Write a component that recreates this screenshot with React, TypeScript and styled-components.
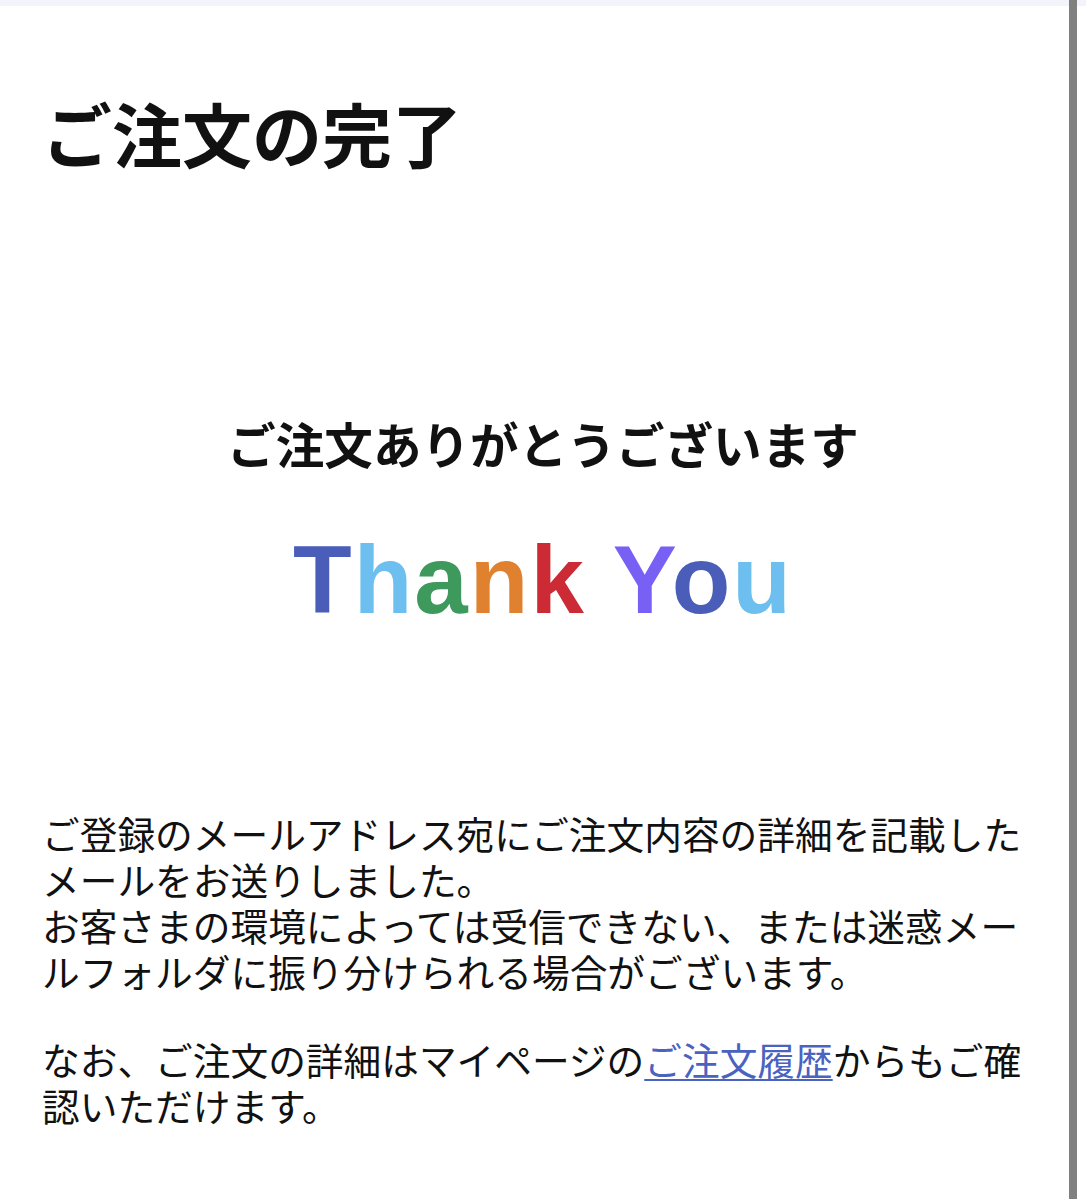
import React from 'react';
import styled, { createGlobalStyle } from 'styled-components';

const GlobalStyle = createGlobalStyle`
  body {
    margin: 0;
    background: #ffffff;
    color: #111111;
    font-family: 'Noto Sans CJK JP', 'Noto Sans', sans-serif;
  }
`;

const TopStrip = styled.div`
  height: 6px;
  background-color: #f3f3fb;
`;

const ScrollTrack = styled.div`
  position: fixed;
  top: 0;
  bottom: 0;
  right: 9px;
  width: 8px;
  background-color: #808080;
`;

const Page = styled.main`
  padding: 0 42px 60px;
`;

const Title = styled.h1`
  margin: 86px 0 0;
  font-size: 70px;
  line-height: 82px;
  font-weight: 700;
`;

const Greeting = styled.h2`
  margin: 240px 0 0;
  text-align: center;
  font-size: 48.6px;
  line-height: 58px;
  font-weight: 700;
`;

const ThankYou = styled.div`
  margin-top: 53px;
  text-align: center;
  font-family: 'Liberation Sans', Arial, sans-serif;
  font-size: 96px;
  line-height: 109px;
  font-weight: 700;
  letter-spacing: 2px;
`;

const Letter = styled.span<{ color: string }>`
  color: ${(props) => props.color};
`;

const Message = styled.section`
  margin-top: 176px;
`;

const Paragraph = styled.p`
  margin: 0 0 42px;
  font-size: 37.7px;
  line-height: 46px;
`;

const HistoryLink = styled.a`
  color: #4a62c0;
  text-decoration: underline;
  text-underline-offset: 4px;
  text-decoration-thickness: 2px;
`;

const letters = [
  { ch: 'T', color: '#4a5db8' },
  { ch: 'h', color: '#6cbfee' },
  { ch: 'a', color: '#3d9a5c' },
  { ch: 'n', color: '#e0812f' },
  { ch: 'k', color: '#cc2b35' },
  { ch: ' ', color: '#000000' },
  { ch: 'Y', color: '#7860f5' },
  { ch: 'o', color: '#4a5db8' },
  { ch: 'u', color: '#6cbfee' },
];

const App = () => {
  return (
    <>
      <GlobalStyle />
      <TopStrip />
      <ScrollTrack />
      <Page>
        <Title>ご注文の完了</Title>
        <Greeting>ご注文ありがとうございます</Greeting>
        <ThankYou>
          {letters.map((l, i) => (
            <Letter key={i} color={l.color}>
              {l.ch}
            </Letter>
          ))}
        </ThankYou>
        <Message>
          <Paragraph>
            ご登録のメールアドレス宛にご注文内容の詳細を記載したメールをお送りしました。
            <br />
            お客さまの環境によっては受信できない、または迷惑メールフォルダに振り分けられる場合がございます。
          </Paragraph>
          <Paragraph>
            なお、ご注文の詳細はマイページの<HistoryLink href="#">ご注文履歴</HistoryLink>からもご確認いただけます。
          </Paragraph>
        </Message>
      </Page>
    </>
  );
};

export default App;
